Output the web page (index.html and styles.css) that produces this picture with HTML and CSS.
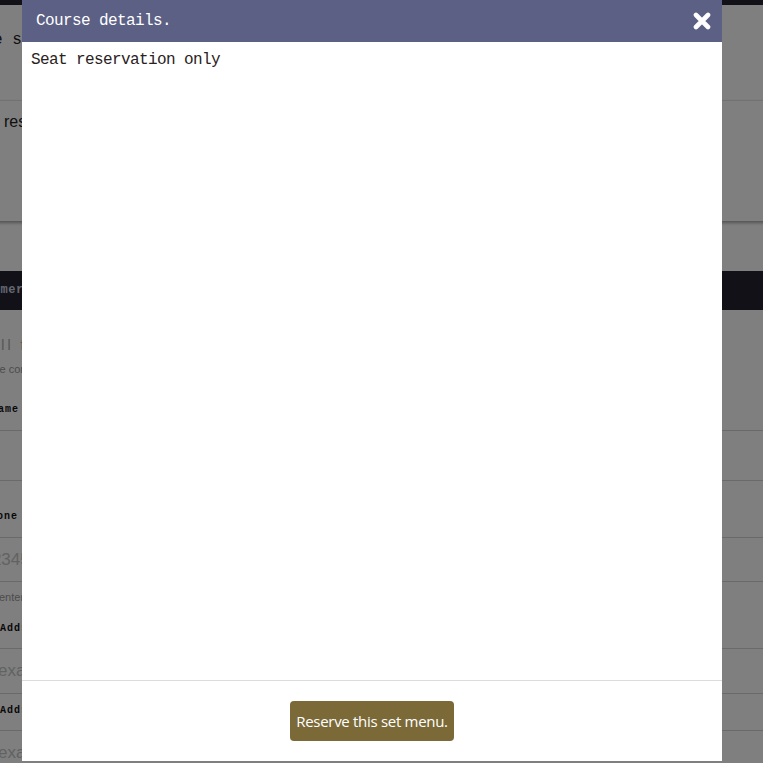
FILE: index.html
```html
<!DOCTYPE html>
<html>
<head>
    <meta charset="utf-8">
    <meta name="viewport" content="width=device-width, initial-scale=1">
    <title>Course details</title>
    <link rel="stylesheet" href="styles.css">
</head>

<body>
    <div class="page">
        <div class="topbar"></div>
        <p class="lead">Please select a course.</p>

        <div class="card">
            <p>Course reservation</p>
        </div>

        <div class="section-bar">Customer information</div>
        <p class="note">All fields are required</p>
        <p class="small">Please confirm the contents</p>

        <label class="label label-name">Name</label>
        <div class="input input-name"></div>

        <label class="label label-phone">Phone</label>
        <div class="input input-phone"><span class="ph">012345678</span></div>
        <p class="hint">enter without hyphen</p>

        <label class="label label-addr">Address</label>
        <div class="input input-addr"><span class="ph">example</span></div>

        <label class="label label-addr2">Address</label>
        <div class="input input-addr2"><span class="ph">example</span></div>
    </div>

    <div class="overlay"></div>

    <div class="modal">
        <div class="modal-head">
            <span class="modal-title">Course details.</span>
            <button class="modal-close" aria-label="close">
                <svg width="18" height="18" viewBox="0 0 18 18">
                    <path d="M3 3 L15 15 M15 3 L3 15" stroke="#fff" stroke-width="4.6" stroke-linecap="round"/>
                </svg>
            </button>
        </div>
        <div class="modal-body">
            <p>Seat reservation only</p>
        </div>
        <div class="modal-foot">
            <button class="reserve-btn">Reserve this set menu.</button>
        </div>
    </div>
</body>
</html>
```

FILE: styles.css
```css
body, html {
    margin: 0;
    padding: 0;
    width: 100%;
    height: 100%;
    overflow: hidden;
    background-color: #fff;
    font-family: "Liberation Mono", "DejaVu Sans Mono", monospace;
    color: #222;}

p {
    margin: 0;}

/* page behind the dialog, scrolled a little to the right */
.page {
    width: 900px;
    margin-left: -60px;}

.topbar {
    height: 5px;
    margin-left: 60px;
    background-color: #22222e;}

.lead {
    margin-top: 25px;
    line-height: 20px;
    font-size: 16px;
    padding-left: 5px;}

.card {
    margin-top: 50px;
    height: 120px;
    border-top: 1px solid #e4e4e4;
    box-shadow: 0 2px 3px rgba(0,0,0,0.35);
    padding-left: 8px;}

.card p {
    padding-top: 11px;
    line-height: 20px;
    font-size: 16px;
    font-family: "Liberation Sans", Arial, sans-serif;}

.section-bar {
    margin-top: 50px;
    height: 39px;
    line-height: 39px;
    background-color: #22222e;
    color: #c8cce0;
    font-size: 12px;
    font-weight: bold;
    letter-spacing: 0.5px;
    padding-left: 22px;}

.note {
    margin-top: 25px;
    line-height: 20px;
    font-size: 14px;
    color: #aaa;
    font-family: "Liberation Sans", Arial, sans-serif;
    padding-left: 49px;
    letter-spacing: 3px;}

.small {
    margin-top: 7px;
    line-height: 14px;
    font-size: 11px;
    color: #999;
    font-family: "Liberation Sans", Arial, sans-serif;
    padding-left: 32px;}

.label {
    display: block;
    line-height: 14px;
    font-size: 10px;
    font-weight: bold;
    letter-spacing: 1px;
    color: #111;}

.label-name  { margin-top: 27px; padding-left: 51px; }
.label-phone { margin-top: 29px; padding-left: 43px; }
.label-addr  { margin-top: 18px; padding-left: 60px; }
.label-addr2 { margin-top: 10px; padding-left: 60px; }

.input {
    box-sizing: border-box;
    border-top: 1px solid #d4d4d4;
    border-bottom: 1px solid #d4d4d4;
    font-family: "Liberation Sans", Arial, sans-serif;
    font-size: 17px;
    color: #c4c4c4;}

.input-name  { margin-top: 13px; height: 51px; }
.input-phone { margin-top: 13px; height: 45px; line-height: 43px; padding-left: 33px; }
.input-addr  { margin-top: 12px; height: 46px; line-height: 44px; padding-left: 58px; }
.input-addr2 { margin-top: 12px; height: 46px; line-height: 44px; padding-left: 58px; }

.hint {
    margin-top: 8px;
    line-height: 14px;
    font-size: 11px;
    color: #999;
    font-family: "Liberation Sans", Arial, sans-serif;
    padding-left: 59px;}

/* dialog */
.overlay {
    position: fixed;
    top: 0;
    left: 0;
    right: 0;
    bottom: 0;
    background-color: rgba(0,0,0,0.5);}

.modal {
    position: fixed;
    top: 0;
    left: 22px;
    width: 700px;
    height: 761px;
    background-color: #fff;
    display: flex;
    flex-direction: column;}

.modal-head {
    height: 42px;
    flex-shrink: 0;
    background-color: #5c6084;
    display: flex;
    align-items: center;
    justify-content: space-between;
    padding: 0 11px 0 14px;}

.modal-title {
    color: #fff;
    font-size: 16px;
    letter-spacing: -0.6px;}

.modal-close {
    border: none;
    background: none;
    padding: 0;
    width: 18px;
    height: 18px;
    cursor: pointer;}

.modal-close svg {
    display: block;}

.modal-body {
    flex: 1;
    padding: 9px 9px;}

.modal-body p {
    font-size: 16px;
    line-height: 18px;
    letter-spacing: -0.6px;
    color: #2a2222;}

.modal-foot {
    border-top: 1px solid #dcdcdc;
    padding: 20px 0;
    display: flex;
    justify-content: center;}

.reserve-btn {
    height: 40px;
    padding: 0 6px;
    border: none;
    border-radius: 4px;
    background-color: #7b6a37;
    color: #fff;
    font-family: "Open Sans", "Noto Sans", sans-serif;
    font-size: 15px;
    letter-spacing: -0.3px;
    cursor: pointer;}
```
